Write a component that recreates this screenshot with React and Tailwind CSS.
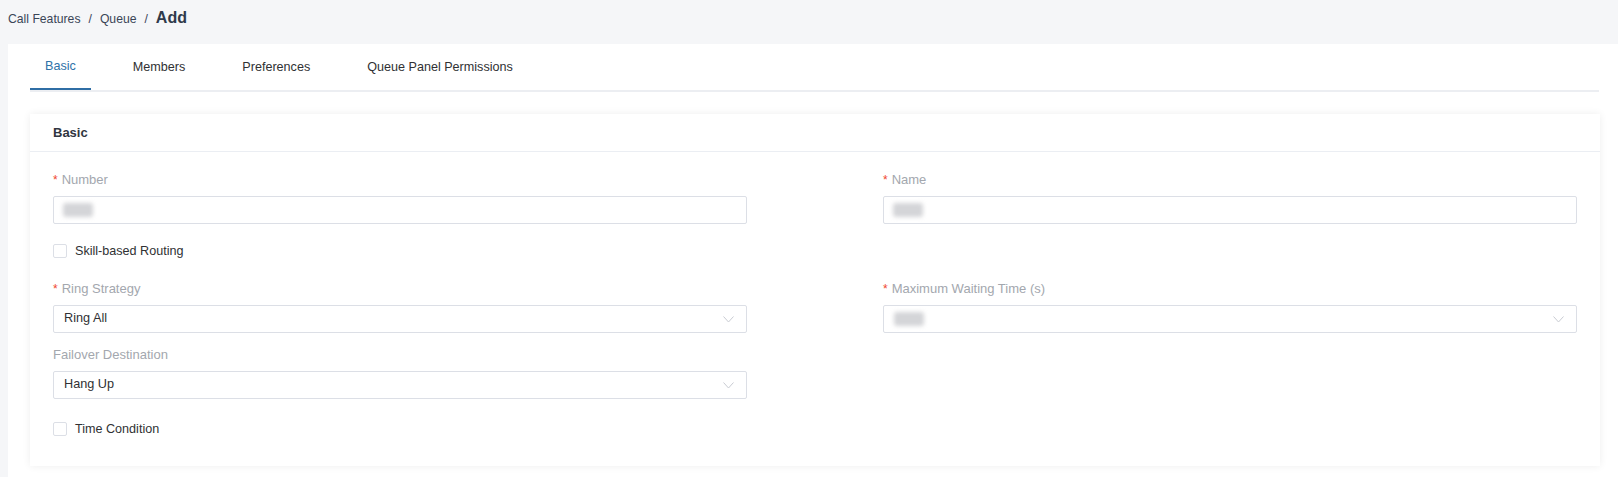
import React from "react";

const font = { fontFamily: '"Liberation Sans", Arial, sans-serif' };

const Label = ({ required, children }) => (
    <div className="h-[20px] flex items-center text-[13px] text-[#a3a7ae] mb-[6px]">
        {required && <span className="text-[#f0462d] mr-[4px] text-[12px]">*</span>}
        {children}
    </div>
);

const Blur = () => (
    <div className="w-[30px] h-[14px] rounded-[3px] bg-[#d4d5d8] blur-[2px]" />
);

const Chevron = () => (
    <svg width="11" height="7" viewBox="0 0 11 7" fill="none">
        <path d="M0.5 0.5 L5.5 6 L10.5 0.5" stroke="#c8cbd2" strokeWidth="1" />
    </svg>
);

const TextInput = () => (
    <div className="h-[28px] border border-[#dcdfe6] rounded-[2px] flex items-center px-[9px]">
        <Blur />
    </div>
);

const Select = ({ value, blurred }) => (
    <div className="h-[28px] border border-[#dcdfe6] rounded-[2px] flex items-center justify-between pl-[10px] pr-[12px]">
        {blurred ? <Blur /> : <span className="text-[12.7px] text-[#303133]">{value}</span>}
        <Chevron />
    </div>
);

const Check = ({ children }) => (
    <div className="h-[20px] flex items-center gap-[8px]">
        <span className="w-[14px] h-[14px] border border-[#dcdfe6] rounded-[2px] bg-white" />
        <span className="text-[12.6px] text-[#303133]">{children}</span>
    </div>
);

const tabs = ["Basic", "Members", "Preferences", "Queue Panel Permissions"];

export default function App() {
    return (
        <div className="min-h-screen bg-[#f5f6f8]" style={font}>
            <div className="h-[44px] px-[8px] pt-[6px] flex items-baseline gap-[8px] text-[12.2px] text-[#3a4557]">
                <span>Call Features</span>
                <span>/</span>
                <span>Queue</span>
                <span>/</span>
                <span className="text-[16px] font-bold text-[#2f3a4b]">Add</span>
            </div>
            <div className="ml-[8px] bg-white pl-[22px] pr-[18px] pb-[10px] min-h-[433px]">
                <div className="flex gap-[27px] border-b-2 border-[#eceef2] mr-[1px]">
                    {tabs.map((t, i) => (
                        <div
                            key={t}
                            className={
                                i === 0
                                    ? "h-[46px] px-[15px] flex items-center text-[12.6px] text-[#2f72a8] border-b-2 border-[#2f6ea5] -mb-[2px]"
                                    : "h-[46px] px-[15px] flex items-center text-[12.6px] text-[#303133]"
                            }
                        >
                            {t}
                        </div>
                    ))}
                </div>
                <div className="mt-[22px] bg-white shadow-[0_0_8px_rgba(0,0,0,0.07)]">
                    <div className="h-[38px] px-[23px] flex items-center border-b border-[#ebeef3] text-[13px] font-bold text-[#303540]">
                        Basic
                    </div>
                    <div className="px-[23px] pt-[18px] pb-[27px] grid grid-cols-2 gap-x-[136px]">
                        <div>
                            <Label required>Number</Label>
                            <TextInput />
                        </div>
                        <div>
                            <Label required>Name</Label>
                            <TextInput />
                        </div>
                        <div className="mt-[17px]">
                            <Check>Skill-based Routing</Check>
                        </div>
                        <div />
                        <div className="mt-[18px]">
                            <Label required>Ring Strategy</Label>
                            <Select value="Ring All" />
                        </div>
                        <div className="mt-[18px]">
                            <Label required>Maximum Waiting Time (s)</Label>
                            <Select blurred />
                        </div>
                        <div className="mt-[12px]">
                            <Label>Failover Destination</Label>
                            <Select value="Hang Up" />
                        </div>
                        <div />
                        <div className="mt-[20px]">
                            <Check>Time Condition</Check>
                        </div>
                        <div />
                    </div>
                </div>
            </div>
        </div>
    );
}
